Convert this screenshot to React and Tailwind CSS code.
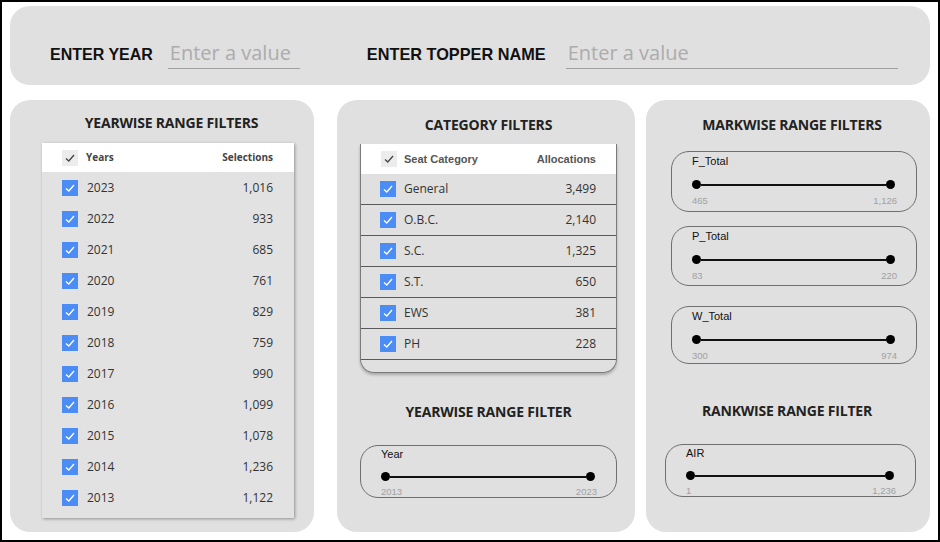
import React from "react";

const years = [
  ["2023", "1,016"],
  ["2022", "933"],
  ["2021", "685"],
  ["2020", "761"],
  ["2019", "829"],
  ["2018", "759"],
  ["2017", "990"],
  ["2016", "1,099"],
  ["2015", "1,078"],
  ["2014", "1,236"],
  ["2013", "1,122"],
];

const categories = [
  ["General", "3,499"],
  ["O.B.C.", "2,140"],
  ["S.C.", "1,325"],
  ["S.T.", "650"],
  ["EWS", "381"],
  ["PH", "228"],
];

const sans = { fontFamily: '"Open Sans", "Noto Sans", sans-serif' };
const arial = { fontFamily: '"Liberation Sans", Arial, sans-serif' };

function Check({ checked = true }) {
  return (
    <div
      className={`w-4 h-4 shrink-0 flex items-center justify-center ${
        checked ? "bg-[#4b8df5]" : "bg-[#ececec]"
      }`}
    >
      <svg width="12" height="12" viewBox="0 0 12 12">
        <polyline
          points="2,6.5 4.8,9 10,3"
          fill="none"
          stroke={checked ? "#ffffff" : "#444444"}
          strokeWidth="1.3"
        />
      </svg>
    </div>
  );
}

function Title({ children, className = "" }) {
  return (
    <h2
      className={`text-[14px] font-bold text-[#222] leading-[20px] text-center tracking-[-0.2px] ${className}`}
      style={sans}
    >
      {children}
    </h2>
  );
}

function Slider({ label, min, max, tall, className = "" }) {
  return (
    <div
      className={`border border-[#6f6f6f] rounded-[18px] pl-5 pr-[21px] ${
        tall ? "pt-[2px]" : "pt-[1px]"
      } ${className}`}
      style={arial}
    >
      <div className="text-[11px] leading-[14px] text-[#111]">{label}</div>
      <div className={`flex items-center ${tall ? "mt-[12px]" : "mt-[11px]"}`}>
        <div className="w-[9px] h-[9px] rounded-full bg-black shrink-0" />
        <div className="flex-1 h-[2px] bg-[#111]" />
        <div className="w-[9px] h-[9px] rounded-full bg-black shrink-0" />
      </div>
      <div
        className={`flex justify-between text-[9.5px] leading-[11px] text-[#a0a0a0] ${
          tall ? "mt-[6px]" : "mt-[5px]"
        }`}
      >
        <span>{min}</span>
        <span className="-mr-[2px]">{max}</span>
      </div>
    </div>
  );
}

function TextField({ width }) {
  return (
    <div className={`border-b border-[#a0a0a0] ${width}`}>
      <input
        className="w-full bg-transparent outline-none pl-[2px] text-[20px] leading-[24px] pb-[3px] text-[#555] placeholder:text-[#acacac]"
        style={sans}
        placeholder="Enter a value"
      />
    </div>
  );
}

export default function App() {
  return (
    <div className="w-[940px] h-[542px] bg-white border-2 border-black box-border overflow-hidden">
      <div className="ml-[8px] mt-[4px] w-[920px] h-[79px] bg-[#e0e0e0] rounded-[20px] flex items-center pt-[18px] pl-[40px]">
        <span className="text-[16px] font-bold text-[#111] mr-[15px]" style={arial}>
          ENTER YEAR
        </span>
        <TextField width="w-[132px]" />
        <span className="text-[16.3px] font-bold text-[#111] ml-[67px] mr-[20px]" style={arial}>
          ENTER TOPPER NAME
        </span>
        <TextField width="w-[332px]" />
      </div>

      <div className="flex mt-[15px] ml-[8px]">
        {/* yearwise list */}
        <div className="w-[304px] h-[432px] bg-[#e0e0e0] rounded-[20px] pt-[13px] pl-[32px] pr-[20px]">
          <Title className="pl-[7px]">YEARWISE RANGE FILTERS</Title>
          <div className="mt-[10px] bg-[#e2e2e2] shadow-[1px_1px_3px_rgba(0,0,0,0.35)] pb-[5px]" style={sans}>
            <div className="bg-white h-[29px] flex items-center pl-[20px] pr-[21px] text-[10px] font-bold text-[#444]">
              <Check checked={false} />
              <span className="ml-[8px]">Years</span>
              <span className="ml-auto">Selections</span>
            </div>
            {years.map(([y, v]) => (
              <div key={y} className="h-[31px] flex items-center pl-[20px] pr-[21px] text-[12px] text-[#333]">
                <Check />
                <span className="ml-[9px]">{y}</span>
                <span className="ml-auto">{v}</span>
              </div>
            ))}
          </div>
        </div>

        {/* category */}
        <div className="w-[298px] h-[432px] ml-[23px] bg-[#e0e0e0] rounded-[20px] pt-[15px] pl-[23px] pr-[18px]">
          <Title>CATEGORY FILTERS</Title>
          <div className="mt-[9px] border border-t-0 border-[#7a7a7a] rounded-b-[14px] shadow-[0_2px_3px_rgba(0,0,0,0.25)] pb-[12px]">
            <div className="bg-white h-[30px] flex items-center pl-[20px] pr-[20px] text-[11px] font-bold text-[#555]" style={arial}>
              <Check checked={false} />
              <span className="ml-[7px]">Seat Category</span>
              <span className="ml-auto">Allocations</span>
            </div>
            {categories.map(([c, v]) => (
              <div
                key={c}
                className="h-[31px] flex items-center pl-[19px] pr-[20px] text-[12px] text-[#333] border-b border-[#5a5a5a]"
                style={sans}
              >
                <Check />
                <span className="ml-[8px]">{c}</span>
                <span className="ml-auto">{v}</span>
              </div>
            ))}
          </div>
          <Title className="mt-[29px]">YEARWISE RANGE FILTER</Title>
          <Slider className="mt-[23px] h-[53px]" label="Year" min="2013" max="2023" />
        </div>

        {/* markwise */}
        <div className="w-[284px] h-[432px] ml-[11px] bg-[#e0e0e0] rounded-[20px] pt-[15px] pr-[13px]">
          <Title className="pl-[21px]">MARKWISE RANGE FILTERS</Title>
          <div className="pl-[25px]">
            <Slider tall className="mt-[16px] h-[61px]" label="F_Total" min="465" max="1,126" />
            <Slider tall className="mt-[14px] h-[60px]" label="P_Total" min="83" max="220" />
            <Slider tall className="mt-[20px] h-[58px]" label="W_Total" min="300" max="974" />
          </div>
          <Title className="mt-[37px] pl-[11px]">RANKWISE RANGE FILTER</Title>
          <div className="pl-[19px] pr-[1px]">
            <Slider className="mt-[23px] h-[53px]" label="AIR" min="1" max="1,236" />
          </div>
        </div>
      </div>
    </div>
  );
}
